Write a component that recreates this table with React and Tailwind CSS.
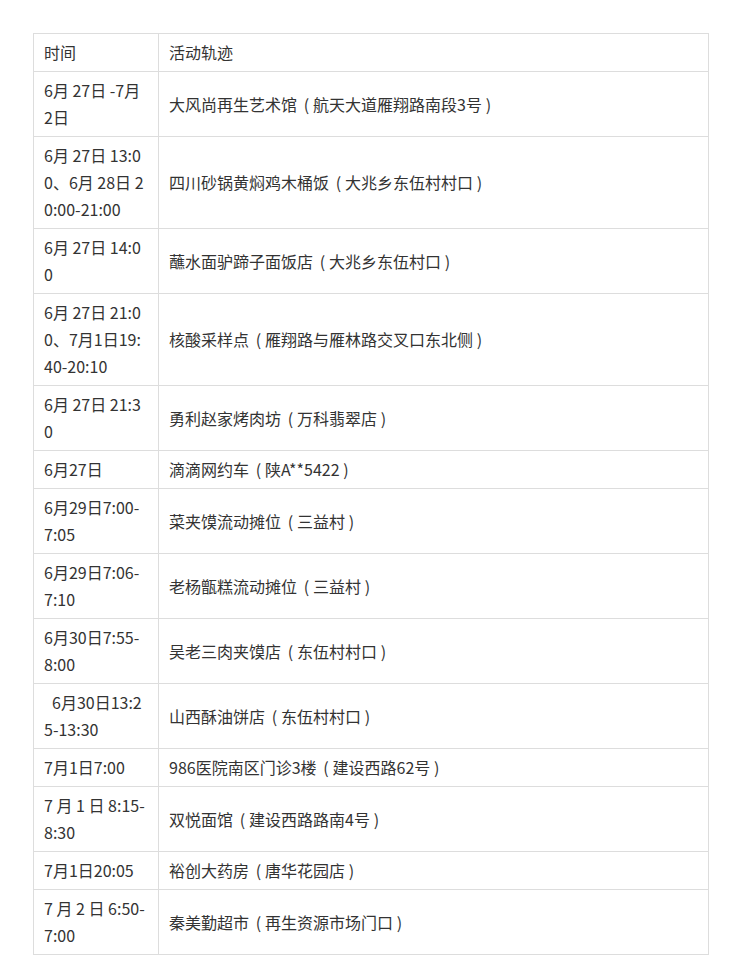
import React from "react";

const rows = [
  ["时间", "活动轨迹"],
  ["6月 27日 -7月2日", "大风尚再生艺术馆（航天大道雁翔路南段3号）"],
  ["6月 27日 13:00、6月 28日 20:00-21:00", "四川砂锅黄焖鸡木桶饭（大兆乡东伍村村口）"],
  ["6月 27日 14:00", "蘸水面驴蹄子面饭店（大兆乡东伍村口）"],
  ["6月 27日 21:00、7月1日19:40-20:10", "核酸采样点（雁翔路与雁林路交叉口东北侧）"],
  ["6月 27日 21:30", "勇利赵家烤肉坊（万科翡翠店）"],
  ["6月27日", "滴滴网约车（陕A**5422）"],
  ["6月29日7:00-7:05", "菜夹馍流动摊位（三益村）"],
  ["6月29日7:06-7:10", "老杨甑糕流动摊位（三益村）"],
  ["6月30日7:55-8:00", "吴老三肉夹馍店（东伍村村口）"],
  ["\u20026月30日13:25-13:30", "山西酥油饼店（东伍村村口）"],
  ["7月1日7:00", "986医院南区门诊3楼（建设西路62号）"],
  ["7 月 1 日 8:15-8:30", "双悦面馆（建设西路路南4号）"],
  ["7月1日20:05", "裕创大药房（唐华花园店）"],
  ["7 月 2 日 6:50-7:00", "秦美勤超市（再生资源市场门口）"],
];

function Place({ text }) {
  const parts = text.split(/([（）])/);
  return (
    <>
      {parts.map((p, i) =>
        p === "（" ? (
          <span key={i} className="inline-block w-[1em] text-center pl-[3px]">
            (
          </span>
        ) : p === "）" ? (
          <span key={i} className="inline-block w-[1em] text-center pr-[3px]">
            )
          </span>
        ) : (
          <React.Fragment key={i}>{p}</React.Fragment>
        )
      )}
    </>
  );
}

export default function App() {
  return (
    <div
      className="bg-white min-h-[967px] pt-[33px] pl-[33px]"
      style={{ fontFamily: '"Noto Sans CJK SC", "Noto Sans", sans-serif' }}
    >
      <table className="table-fixed border-collapse w-[676px] text-[16px] leading-[27px] text-[#333333]">
        <colgroup>
          <col className="w-[125px]" />
          <col />
        </colgroup>
        <tbody>
          {rows.map((r, i) => (
            <tr key={i}>
              <td className="border border-[#dddddd] px-[10px] py-[5px] align-middle text-left break-all">
                {r[0]}
              </td>
              <td className="border border-[#dddddd] px-[10px] py-[5px] align-middle text-left whitespace-nowrap">
                <Place text={r[1]} />
              </td>
            </tr>
          ))}
        </tbody>
      </table>
    </div>
  );
}
